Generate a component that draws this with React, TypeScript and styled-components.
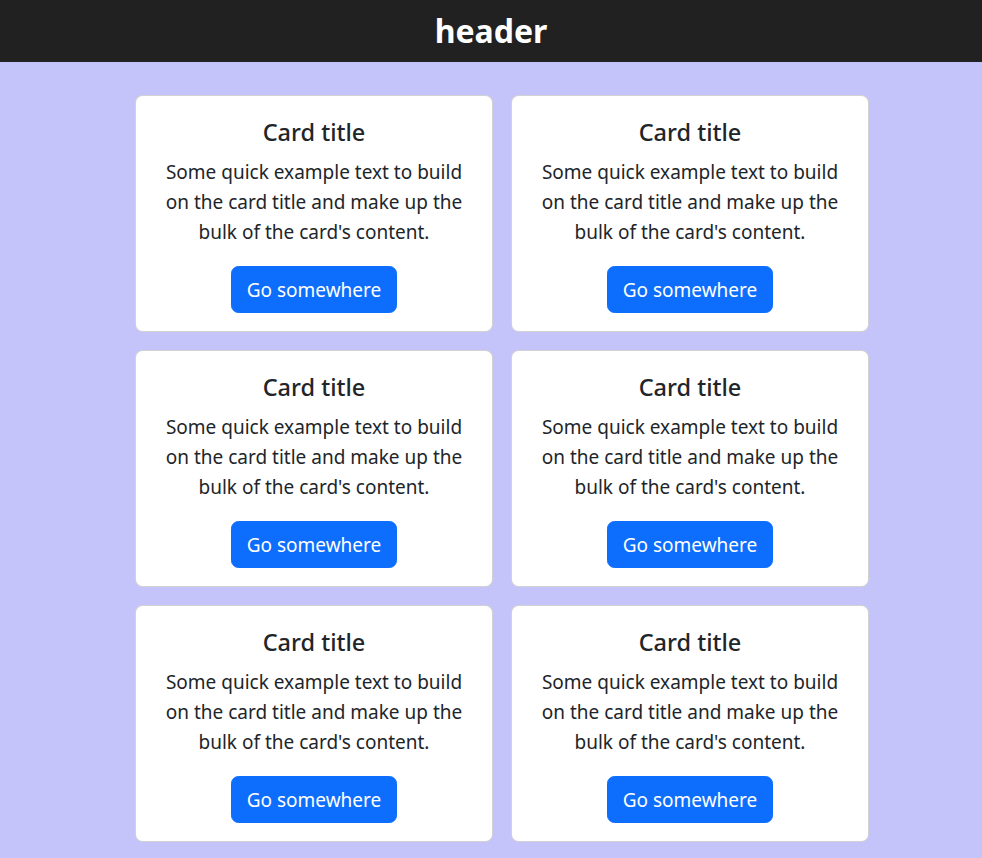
import React from "react";
import styled, { createGlobalStyle } from "styled-components";

const Global = createGlobalStyle`
  html, body { margin: 0; padding: 0; }
  body {
    background: #c4c4fa;
    font-family: "Noto Sans", "Open Sans", sans-serif;
    color: #212529;
  }
`;

const Header = styled.header`
  height: 62px;
  background: #212121;
  display: flex;
  align-items: center;
  justify-content: center;
`;

const HeaderTitle = styled.h1`
  margin: 0;
  color: #ffffff;
  font-size: 32px;
  font-weight: 700;
  line-height: 1;
`;

const Main = styled.main`
  padding: 33px 0 15px 135px;
`;

const Grid = styled.div`
  display: grid;
  grid-template-columns: 358px 358px;
  gap: 18px;
`;

const Card = styled.div`
  box-sizing: border-box;
  background: #ffffff;
  border: 1px solid rgba(0, 0, 0, 0.175);
  border-radius: 7.5px;
  padding: 22px 20px 18px;
  display: flex;
  flex-direction: column;
  align-items: center;
  text-align: center;
`;

const Title = styled.h5`
  margin: 0 0 11px;
  font-size: 23.5px;
  font-weight: 500;
  line-height: 28px;
`;

const Text = styled.p`
  margin: 0 0 19px;
  font-size: 19px;
  line-height: 30px;
`;

const Button = styled.a`
  display: inline-block;
  background: #0d6efd;
  color: #ffffff;
  border: 1px solid #0d6efd;
  border-radius: 7.5px;
  padding: 7.5px 15px;
  font-size: 19px;
  line-height: 30px;
  text-decoration: none;
  cursor: pointer;
`;

const cards = Array.from({ length: 6 }, (_, i) => i);

export default function App() {
  return (
    <>
      <Global />
      <Header>
        <HeaderTitle>header</HeaderTitle>
      </Header>
      <Main>
        <Grid>
          {cards.map((i) => (
            <Card key={i}>
              <Title>Card title</Title>
              <Text>
                Some quick example text to build on the card title and make up
                the bulk of the card's content.
              </Text>
              <Button>Go somewhere</Button>
            </Card>
          ))}
        </Grid>
      </Main>
    </>
  );
}
